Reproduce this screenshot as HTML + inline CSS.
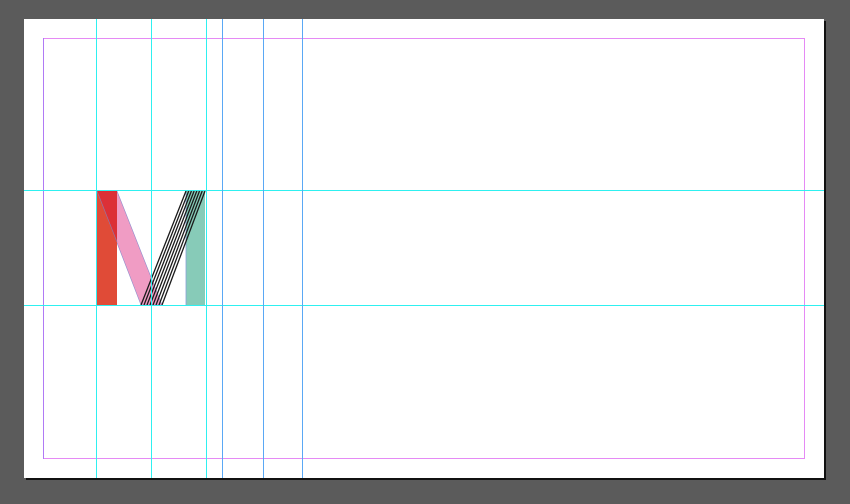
<!DOCTYPE html>
<html><head><style>html,body{margin:0;padding:0;background:#5b5b5b;width:850px;height:504px;overflow:hidden}</style></head>
<body>
<svg width="850" height="504" viewBox="0 0 850 504" xmlns="http://www.w3.org/2000/svg" style="display:block">
<rect x="0" y="0" width="850" height="504" fill="#5b5b5b"/>
<rect x="26" y="21" width="800" height="459" fill="#111"/>
<rect x="24" y="19" width="800" height="459" fill="#fff"/>
<rect x="43.5" y="38.5" width="761" height="420" fill="none" stroke="#e58af5" stroke-width="1"/>
<line x1="43.5" y1="38" x2="43.5" y2="459" stroke="#b07af5"/>
<polygon points="97,191 117,191 162,305 141,305" fill="#f09cc4" stroke="#8c8ccc" stroke-width="0.6"/>
<rect x="97" y="191" width="20" height="114" fill="#e04b37"/>
<polygon points="97,191 117,191 117,242" fill="#dc3037"/>
<line x1="97" y1="191" x2="117" y2="242" stroke="#8c7ab0" stroke-width="0.6"/>
<rect x="186" y="191" width="19" height="114" fill="#87cbb8"/>
<line x1="186" y1="191" x2="186" y2="305" stroke="#8aa0d8" stroke-width="0.8"/>
<g stroke="#1a1a1a" stroke-width="1.3">
<line x1="186" y1="191" x2="141" y2="305"/>
<line x1="188.7" y1="191" x2="144" y2="305"/>
<line x1="191.4" y1="191" x2="147" y2="305"/>
<line x1="194.1" y1="191" x2="150" y2="305"/>
<line x1="196.8" y1="191" x2="153" y2="305"/>
<line x1="199.5" y1="191" x2="156" y2="305"/>
<line x1="202.2" y1="191" x2="159" y2="305"/>
<line x1="205" y1="191" x2="162" y2="305"/>
</g>
<g stroke="#2ef0f0" stroke-width="1">
<line x1="96.5" y1="19" x2="96.5" y2="478"/>
<line x1="151.5" y1="19" x2="151.5" y2="478"/>
<line x1="206.5" y1="19" x2="206.5" y2="478"/>
<line x1="24" y1="190.5" x2="824" y2="190.5"/>
<line x1="24" y1="305.5" x2="824" y2="305.5"/>
</g>
<g stroke="#5aa8f5" stroke-width="1">
<line x1="222.5" y1="19" x2="222.5" y2="478"/>
<line x1="263.5" y1="19" x2="263.5" y2="478"/>
<line x1="302.5" y1="19" x2="302.5" y2="478"/>
</g>
</svg>
</body></html>
